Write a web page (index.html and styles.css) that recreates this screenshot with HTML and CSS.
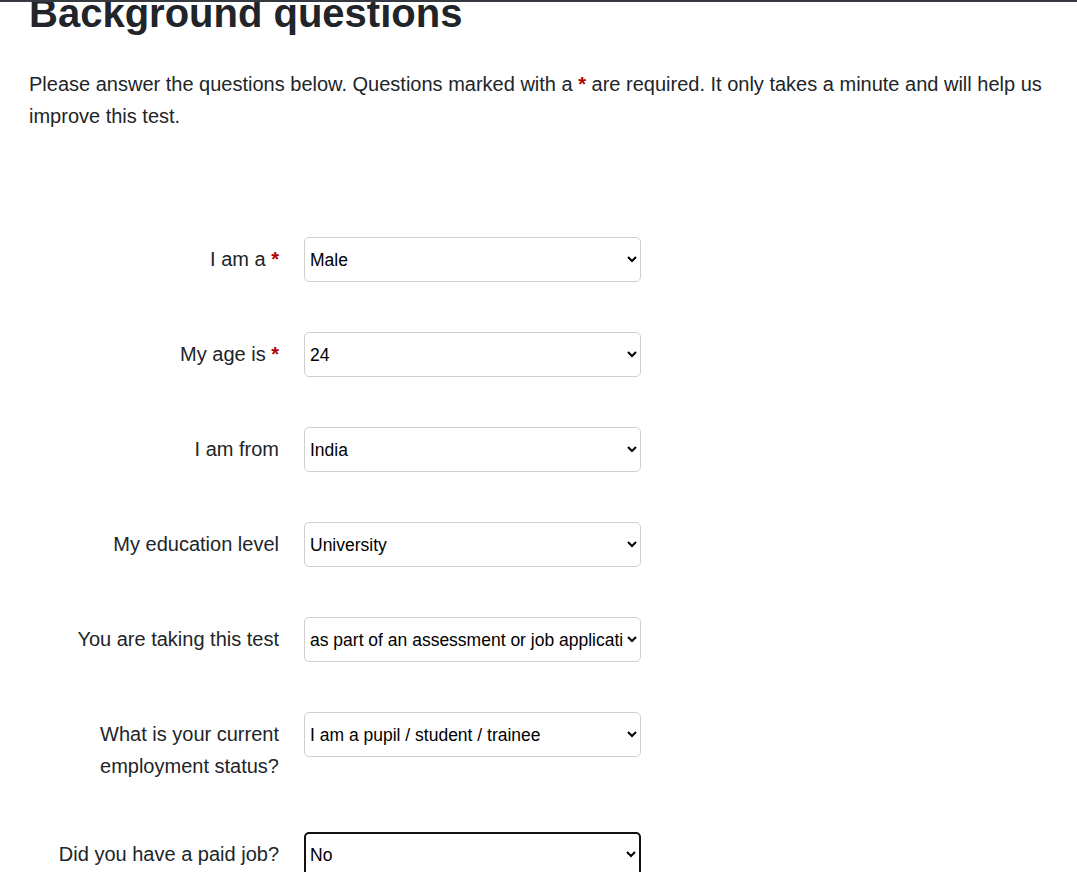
FILE: index.html
```html
<!DOCTYPE html>
<html lang="en">
<head>
<meta charset="utf-8">
<title>Background questions</title>
<link rel="stylesheet" href="styles.css">
</head>
<body>
<div class="topbar"></div>
<main class="page">
  <h1 class="title">Background questions</h1>
  <p class="intro">Please answer the questions below. Questions marked with a <span class="req">*</span> are required. It only takes a minute and will help us improve this test.</p>
  <form class="form">
    <div class="row">
      <label class="label" for="q1">I am a <span class="req">*</span></label>
      <select id="q1" class="field"><option>Male</option><option>Female</option></select>
    </div>
    <div class="row">
      <label class="label" for="q2">My age is <span class="req">*</span></label>
      <select id="q2" class="field"><option>24</option></select>
    </div>
    <div class="row">
      <label class="label" for="q3">I am from</label>
      <select id="q3" class="field"><option>India</option></select>
    </div>
    <div class="row">
      <label class="label" for="q4">My education level</label>
      <select id="q4" class="field"><option>University</option></select>
    </div>
    <div class="row">
      <label class="label" for="q5">You are taking this test</label>
      <select id="q5" class="field"><option>as part of an assessment or job application</option></select>
    </div>
    <div class="row">
      <label class="label" for="q6">What is your current employment status?</label>
      <select id="q6" class="field"><option>I am a pupil / student / trainee</option></select>
    </div>
    <div class="row">
      <label class="label" for="q7">Did you have a paid job?</label>
      <select id="q7" class="field field-focus"><option>No</option><option>Yes</option></select>
    </div>
  </form>
</main>
</body>
</html>
```

FILE: styles.css
```css
html, body {
  margin: 0;
  padding: 0;
  background: #fff;
}
body {
  font-family: "Liberation Sans", Arial, sans-serif;
  color: #212529;
  font-size: 20px;
  line-height: 32px;
}
.topbar {
  position: fixed;
  top: 0;
  left: 0;
  right: 0;
  height: 2px;
  background: #343a40;
  z-index: 10;
}
.page {
  padding: 0 29px;
}
.title {
  margin: -11px 0 0 0;
  font-size: 40px;
  line-height: 48px;
  font-weight: 700;
  color: #212529;
}
.intro {
  margin: 31px 0 0 0;
}
.req {
  color: #b00000;
  font-weight: 700;
}
.form {
  margin-top: 105px;
  display: flex;
  flex-direction: column;
  gap: 50px;
}
.row {
  display: grid;
  grid-template-columns: 250px 337px;
  column-gap: 25px;
  align-items: start;
}
.label {
  text-align: right;
  padding-top: 6px;
}
.field {
  height: 45px;
  width: 337px;
  box-sizing: border-box;
  border: 1px solid #cfcfcf;
  border-radius: 5px;
  background: #fff;
  color: #000;
  font-family: "Liberation Sans", Arial, sans-serif;
  font-size: 17.5px;
  padding: 0 1px;
}
.field-focus {
  border: 2px solid #111;
  padding: 0;
}
```
